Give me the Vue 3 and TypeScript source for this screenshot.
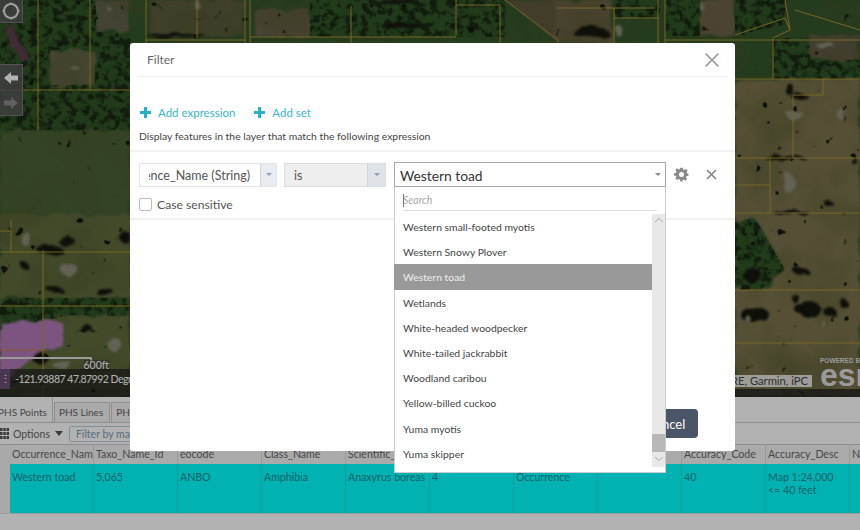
<script setup lang="ts">
const tabs = ['PHS Points', 'PHS Lines', 'PHS Polygons']

const species = [
  'Western small-footed myotis',
  'Western Snowy Plover',
  'Western toad',
  'Wetlands',
  'White-headed woodpecker',
  'White-tailed jackrabbit',
  'Woodland caribou',
  'Yellow-billed cuckoo',
  'Yuma myotis',
  'Yuma skipper',
]

const columns = [
  'Occurrence_Name', 'Taxo_Name_Id', 'eocode', 'Class_Name', 'Scientific_Name', 'Rank',
  'Type', 'Notes', 'Accuracy_Code', 'Accuracy_Desc', 'Notes',
]
const cells = [
  'Western toad', '5,065', 'ANBO', 'Amphibia', 'Anaxyrus boreas', '4',
  'Occurrence', '', '40', 'Map 1:24,000\n<= 40 feet', '',
]

// parcel boundaries on the map
const parcels = [
  'M38 0V130M90 0V90M0 90H130M11 220V252M0 231H11M0 252H130M43 250V397M0 306H130',
  'M146 0V43M197 0V38M245 0V43M250 0V43M146 40H245M351 6V43M456 0V36M250 37H456M456 5H500M500 5V43',
  'M505 0L558 40V43M557 8H655M614 8V43M614 18H658M658 0V43M665 0V43M665 40H860',
  'M735 79H860M735 158H860M735 213H860M735 290H860M735 343H860M823 79V95M793 95H823M793 95V158',
  'M770 158V213M735 185H770M735 35L785 18L790 30L773 38V79M785 0L790 30M795 10L860 30',
]
const fields = [
  { d: 'M735 79H860V397H735Z', fill: '#7a724e' },
  { d: 'M0 215H130V397H0Z', fill: '#5e6b3c' },
  { d: 'M0 130H130V215H0Z', fill: '#4c6034' },
  { d: 'M555 0H612V43H555Z', fill: '#6a6044' },
  { d: 'M150 0H245V36H150Z', fill: '#5a5c3c' },
  { d: 'M255 10H310V36H255Z', fill: '#66604a' },
  { d: 'M505 0H555V40Z', fill: '#5e583e' },
  { d: 'M700 0H735V36H700Z', fill: '#6e6248' },
  { d: 'M50 50H95V85H50Z', fill: '#66664c' },
  { d: 'M96 0H130V32H96Z', fill: '#5f6048' },
  { d: 'M810 35H860V60H810Z', fill: '#5e5a44' },
]
const forests = [
  'M0 0H50V130H0Z', 'M50 85H130V130H50Z', 'M95 32H130V90H95Z', 'M50 0H96V50H50Z',
  'M310 0H505V37H310Z', 'M615 0H660V18H615Z', 'M665 0H700V36H665Z',
  'M773 38H810V79H773Z', 'M810 60H860V79H810Z', 'M735 0H785V25L735 35Z',
  'M735 222L755 218L785 270L760 290H735Z', 'M10 298H130V316L70 315L0 330V305Z',
]
const trees = [
  [50, 250, 13, 4], [68, 243, 8, 5], [25, 266, 4, 3], [55, 290, 8, 3], [105, 292, 9, 3], [125, 237, 4, 7],
  [85, 327, 4, 5], [790, 90, 5, 5], [800, 97, 9, 3], [785, 158, 20, 2], [790, 212, 18, 2],
  [755, 315, 14, 8], [800, 270, 8, 3], [800, 308, 7, 4], [795, 298, 4, 4], [810, 310, 11, 8],
  [830, 312, 6, 5], [845, 305, 4, 4], [830, 205, 4, 3], [855, 162, 3, 3], [40, 358, 9, 4],
  [15, 380, 5, 2], [752, 275, 10, 6], [400, 25, 20, 3], [590, 32, 18, 5], [400, 3, 25, 2], [175, 36, 30, 2],
]
const lights = [
  [75, 68, 4, 2], [840, 113, 3, 6], [795, 115, 9, 4], [790, 185, 6, 10], [70, 270, 8, 7], [25, 238, 5, 7],
  [115, 345, 7, 7], [748, 319, 2, 3], [825, 45, 9, 3], [62, 365, 10, 3], [826, 326, 2, 3], [620, 32, 4, 5],
  [197, 4, 2, 5], [700, 5, 2, 4], [108, 8, 2, 2],
]
</script>

<template>
  <div class="page">
    <div class="map">
      <svg class="imagery" viewBox="0 0 860 397" preserveAspectRatio="none">
        <defs>
          <filter id="canopy" x="0" y="0" width="100%" height="100%" color-interpolation-filters="sRGB">
            <feTurbulence type="fractalNoise" baseFrequency="0.13" numOctaves="3" seed="6" />
            <feColorMatrix values="0 0 0 0 .1  0 0 0 0 .16  0 0 0 0 .08  5 0 0 0 -2.300" />
            <feGaussianBlur stdDeviation=".7" />
            <feComposite in2="SourceGraphic" operator="in" />
          </filter>
          <filter id="scatter" x="0" y="0" width="100%" height="100%" color-interpolation-filters="sRGB">
            <feTurbulence type="fractalNoise" baseFrequency="0.08" numOctaves="2" seed="21" />
            <feColorMatrix values="0 0 0 0 .08  0 0 0 0 .1  0 0 0 0 .05  14 0 0 0 -10.300" />
            <feGaussianBlur stdDeviation=".7" />
          </filter>
          <filter id="grain" x="0" y="0" width="100%" height="100%" color-interpolation-filters="sRGB">
            <feTurbulence type="fractalNoise" baseFrequency="0.02" numOctaves="3" seed="11" />
            <feColorMatrix values="0 0 0 0 .3  0 0 0 0 .32  0 0 0 0 .15  1 0 0 0 -.42" />
          </filter>
          <filter id="rough" x="-5%" y="-5%" width="110%" height="110%">
            <feTurbulence type="fractalNoise" baseFrequency="0.06" numOctaves="2" seed="3" />
            <feDisplacementMap in="SourceGraphic" scale="10" />
            <feGaussianBlur stdDeviation="1.200" />
          </filter>
        </defs>
        <rect width="860" height="397" fill="#36552b" />
        <g filter="url(#rough)">
          <path v-for="f in fields" :key="f.d" :d="f.d" :fill="f.fill" />
        </g>
        <rect width="860" height="397" filter="url(#grain)" />
        <g filter="url(#rough)">
          <path v-for="f in forests" :key="f" :d="f" fill="#2f5226" />
        </g>
        <path v-for="f in forests" :key="f" :d="f" filter="url(#canopy)" />
        <rect width="860" height="397" filter="url(#scatter)" />
        <g filter="url(#rough)">
          <path d="M0 322L45 320L65 325L60 345L30 358L10 375H0Z" fill="#b07ab8" />
          <path d="M120 240L130 225V245ZM5 30L20 60L30 60L12 25Z" fill="#5e3c4c" />
          <ellipse v-for="t in trees" :key="`${t[0]}-${t[1]}`" :cx="t[0]" :cy="t[1]" :rx="t[2]" :ry="t[3]" fill="#15190f" />
          <ellipse v-for="l in lights" :key="`${l[0]}-${l[1]}`" :cx="l[0]" :cy="l[1]" :rx="l[2]" :ry="l[3]" fill="#8e8c7a" />
        </g>
        <path v-for="p in parcels" :key="p" :d="p" fill="none" stroke="#ab9336" stroke-width="1" />
        <path d="M0 350H45" fill="none" stroke="#c9803c" stroke-width="1" />
      </svg>

      <div class="tool tool-locate">
        <svg width="20" height="20" viewBox="0 0 20 20">
          <circle cx="10" cy="10" r="7" fill="none" stroke="#e6e6e6" stroke-width="2" />
          <path d="M10 1V4M10 16V19M1 10H4M16 10H19" stroke="#e6e6e6" stroke-width="1" />
        </svg>
      </div>
      <div class="tool tool-nav">
        <svg width="16" height="14" viewBox="0 0 16 14"><path d="M1 7L8 1V4.500H15V9.500H8V13Z" fill="#fff" /></svg>
        <svg width="16" height="14" viewBox="0 0 16 14"><path d="M15 7L8 1V4.500H1V9.500H8V13Z" fill="#8a8a8a" /></svg>
      </div>

      <div class="scale"><span>600ft</span></div>
      <div class="coords">
        <span class="coords-btn">⋮</span>
        <span class="coords-text">-121.93887 47.87992 Degrees</span>
      </div>
      <div class="attribution">HERE, Garmin, iPC</div>
      <div class="esri"><small>POWERED BY</small><b>esri</b></div>
      <div class="map-foot"></div>
    </div>

    <div class="panel">
      <div class="tabs">
        <div v-for="(t, i) in tabs" :key="t" class="tab" :class="{ active: i === 0 }">{{ t }}</div>
      </div>
      <div class="options">
        <svg width="9" height="11" viewBox="0 0 9 11" class="grid-ic">
          <path d="M0 0h2.500v3H0zM3.300 0h2.500v3H3.300zM6.500 0H9v3H6.500zM0 4h2.500v3H0zM3.300 4h2.500v3H3.300zM6.500 4H9v3H6.500zM0 8h2.500v3H0zM3.300 8h2.500v3H3.300zM6.500 8H9v3H6.500z" fill="#555" />
        </svg>
        <span class="options-label">Options</span>
        <span class="options-caret"></span>
        <div class="map-filter">Filter by map extent</div>
      </div>
      <div class="grid">
        <div class="gutter"></div>
        <div class="cols head">
          <div v-for="(c, i) in columns" :key="i" class="cell">{{ c }}</div>
        </div>
        <div class="gutter"></div>
        <div class="cols row">
          <div v-for="(c, i) in cells" :key="i" class="cell">{{ c }}</div>
        </div>
      </div>
    </div>

    <div class="dim">
      <div class="modal">
        <div class="modal-head">
          <span>Filter</span>
          <svg width="16" height="16" viewBox="0 0 16 16"><path d="M1.500 1.500L14.500 14.500M14.500 1.500L1.500 14.500" stroke="#999" stroke-width="1.700" fill="none" /></svg>
        </div>

        <div class="adds">
          <span class="add"><i class="plus"></i>Add expression</span>
          <span class="add"><i class="plus"></i>Add set</span>
        </div>
        <div class="hint">Display features in the layer that match the following expression</div>

        <div class="expr">
          <div class="expr-row">
            <div class="sel sel-field">
              <span class="sel-text"><span>Occurrence_Name (String)</span></span>
              <span class="sel-arrow"><i></i></span>
            </div>
            <div class="sel sel-op">
              <span class="sel-text"><span>is</span></span>
              <span class="sel-arrow"><i></i></span>
            </div>
            <div class="value">
              <span>Western toad</span>
              <i class="value-caret"></i>
              <div class="drop">
                <div class="search"><span class="search-in">Search</span></div>
                <div class="drop-body">
                  <ul class="list">
                    <li v-for="s in species" :key="s" :class="{ picked: s === 'Western toad' }">{{ s }}</li>
                  </ul>
                  <div class="scroll">
                    <svg width="10" height="6" viewBox="0 0 10 6"><path d="M1 5L5 1.500L9 5" fill="none" stroke="#aaa" /></svg>
                    <div class="thumb"></div>
                    <svg width="10" height="6" viewBox="0 0 10 6"><path d="M1 1L5 4.500L9 1" fill="none" stroke="#aaa" /></svg>
                  </div>
                </div>
              </div>
            </div>
            <svg class="gear" width="15" height="15" viewBox="0 0 24 24">
              <path fill="#8a8a8a" fill-rule="evenodd" d="M10 1h4l.6 3.100 1.900.8 2.600-1.800 2.800 2.800-1.800 2.600.8 1.900L23 10v4l-3.100.6-.8 1.900 1.800 2.600-2.800 2.800-2.600-1.800-1.900.8L13.900 23h-4l-.6-3.100-1.900-.8-2.600 1.800-2.800-2.800 1.800-2.600-.8-1.900L0 14v-4l3.100-.6.8-1.900L2.100 4.900l2.800-2.800 2.600 1.800 1.900-.8zM12 8a4 4 0 1 0 0 8 4 4 0 0 0 0-8z" />
            </svg>
            <svg class="del" width="11" height="11" viewBox="0 0 11 11"><path d="M1 1L10 10M10 1L1 10" stroke="#888" stroke-width="1.700" fill="none" /></svg>
          </div>
          <label class="case"><i class="box"></i>Case sensitive</label>
        </div>

        <div class="foot">
          <button class="cancel">Cancel</button>
        </div>
      </div>
    </div>
  </div>
</template>

<style scoped>
.page {
  position: relative;
  width: 860px;
  height: 530px;
  overflow: hidden;
  background: #fff;
  font-family: Lato, "Open Sans", sans-serif;
}

.map {
  position: relative;
  height: 397px;
  overflow: hidden;
}
.imagery {
  display: block;
  width: 860px;
  height: 397px;
}
.tool {
  position: absolute;
  left: 0;
  width: 23px;
  background: rgba(90, 90, 90, .85);
  border: 1px solid #777;
  border-left: 0;
  display: flex;
  flex-direction: column;
  align-items: center;
  justify-content: space-around;
  box-sizing: border-box;
}
.tool-locate { top: -1px; height: 24px; }
.tool-nav { top: 64px; height: 52px; }

.scale {
  position: absolute;
  left: 0;
  top: 357px;
  width: 92px;
  height: 6px;
  border-top: 2px solid #ddd;
  border-right: 2px solid #ddd;
  box-sizing: border-box;
}
.scale span {
  position: absolute;
  right: -19px;
  top: 1px;
  font-size: 10.500px;
  line-height: 11px;
  color: #fff;
  background: rgba(60, 60, 60, .6);
}
.coords {
  position: absolute;
  left: 0;
  top: 369px;
  width: 300px;
  height: 20px;
  display: flex;
  align-items: center;
  gap: 5px;
  background: rgba(30, 30, 30, .7);
  color: #fff;
  white-space: nowrap;
}
.coords-text {
  font-size: 10.500px;
  letter-spacing: -.5px;
}
.coords-btn {
  width: 10px;
  height: 20px;
  line-height: 20px;
  text-align: right;
  background: #6b4f75;
  font-size: 11px;
  flex: none;
}
.attribution {
  position: absolute;
  left: 640px;
  top: 375px;
  width: 172px;
  height: 12px;
  line-height: 12px;
  overflow: hidden;
  white-space: nowrap;
  text-align: right;
  background: rgba(255, 255, 255, .8);
  color: #444;
  font-size: 11.200px;
  padding-right: 4px;
  box-sizing: border-box;
}
.esri {
  position: absolute;
  left: 820px;
  top: 357px;
  color: #ddd;
  white-space: nowrap;
  display: flex;
  flex-direction: column;
}
.esri small {
  font-family: "Liberation Sans", sans-serif;
  font-size: 6.500px;
  font-weight: 700;
  line-height: 7px;
}
.esri b {
  font-family: "Liberation Sans", sans-serif;
  font-size: 32px;
  line-height: 22px;
}
.map-foot {
  position: absolute;
  left: 0;
  right: 0;
  bottom: 0;
  height: 8px;
  background: rgba(30, 30, 30, .75);
}

.panel {
  height: 133px;
  background: #fff;
  display: flex;
  flex-direction: column;
  color: #666;
}
.tabs {
  height: 26px;
  display: flex;
  gap: 1px;
  align-items: flex-end;
  margin-left: -8px;
  border-bottom: 1px solid #ccc;
  box-sizing: border-box;
  flex: none;
}
.tab {
  height: 19px;
  line-height: 18px;
  padding: 0 6px 0 4px;
  font-size: 10px;
  border: 1px solid #ccc;
  border-bottom: 0;
  background: #f4f4f4;
  white-space: nowrap;
}
.tab.active {
  height: 25px;
  line-height: 30px;
  padding: 0 5px;
  background: #fff;
  border-top: 2px solid #dfe9f2;
}
.options {
  height: 21px;
  flex: none;
  display: flex;
  align-items: center;
  border-bottom: 1px solid #ccc;
  font-size: 10.500px;
}
.grid-ic { flex: none; }
.options-label { margin-left: 4px; }
.options-caret {
  margin-left: 5px;
  border-left: 4px solid transparent;
  border-right: 4px solid transparent;
  border-top: 5px solid #555;
}
.map-filter {
  margin-left: 6px;
  height: 16px;
  line-height: 15px;
  width: 120px;
  padding-left: 6px;
  border: 1px solid #bcd;
  border-radius: 2px;
  color: #7f9cba;
  box-sizing: border-box;
}
.grid {
  display: grid;
  grid-template-columns: 10px auto;
  grid-template-rows: 19px 49px;
  flex: none;
  border-bottom: 1px solid #ddd;
}
.gutter { background: #f2f2f2; }
.cols {
  display: grid;
  grid-template-columns: repeat(11, 84px);
  overflow: hidden;
  font-size: 10.600px;
}
.cell {
  padding: 2px 2px 0;
  white-space: pre-line;
  overflow: hidden;
  border-right: 1px solid #ddd;
  box-sizing: border-box;
  line-height: 12.500px;
}
.head .cell {
  white-space: nowrap;
  background: #f4f4f4;
  padding-top: 3px;
  color: #666;
}
.row { background: #00ffff; color: #0b8f94; }
.row .cell {
  padding-top: 7px;
  border-right-color: #22dede;
}

.dim {
  position: absolute;
  inset: 0;
  display: flex;
  padding: 43px 125px 79px 130px;
  background: rgba(0, 0, 0, .3);
  box-sizing: border-box;
}
.modal {
  flex: 1;
  display: flex;
  flex-direction: column;
  background: #fff;
  border-radius: 3px;
  color: #444;
}
.modal-head {
  height: 33px;
  margin: 0 8px 0 8px;
  padding: 0 7px 0 9px;
  display: flex;
  align-items: center;
  justify-content: space-between;
  border-bottom: 1px solid #f0f0f0;
  font-size: 12px;
  color: #666;
  flex: none;
}
.adds {
  margin-top: 27px;
  padding-left: 10px;
  display: flex;
  gap: 19px;
  flex: none;
  height: 16px;
  align-items: center;
}
.add {
  display: flex;
  align-items: center;
  gap: 7px;
  font-size: 11.500px;
  color: #3ab4c8;
}
.plus {
  width: 11px;
  height: 11px;
  background:
    linear-gradient(#27b0c8, #27b0c8) center / 11px 3px no-repeat,
    linear-gradient(#27b0c8, #27b0c8) center / 3px 11px no-repeat;
}
.hint {
  margin-top: 9px;
  padding-left: 9px;
  font-size: 10.400px;
  line-height: 14px;
  color: #444;
  height: 21px;
  flex: none;
}
.expr {
  border-top: 2px solid #f1f1f1;
  border-bottom: 2px solid #f1f1f1;
  height: 70px;
  box-sizing: border-box;
  padding: 10px 9px 0;
  flex: none;
}
.expr-row {
  display: flex;
  align-items: center;
  height: 25px;
}
.sel {
  height: 24px;
  display: flex;
  align-items: stretch;
  border: 1px solid #e4e4e4;
  box-sizing: border-box;
  font-size: 12.500px;
  color: #555;
}
.sel-text {
  flex: 1;
  min-width: 0;
  display: flex;
  overflow: hidden;
  white-space: nowrap;
  line-height: 23px;
}
.sel-text span { flex: none; }
.sel-field { width: 138px; }
.sel-field .sel-text {
  justify-content: flex-end;
  border-left: 9px solid #fff;
  padding-right: 10px;
}
.sel-op {
  width: 102px;
  margin-left: 7px;
  background: #eeeeee;
  border-color: #ddd;
}
.sel-op .sel-text { padding-left: 9px; }
.sel-arrow {
  width: 15px;
  flex: none;
  display: flex;
  align-items: center;
  justify-content: center;
  background: #e8ebef;
  border-left: 1px solid #d4d4d4;
}
.sel-op .sel-arrow { width: 17px; background: #dfe2e6; }
.sel-arrow i {
  border-left: 3px solid transparent;
  border-right: 3px solid transparent;
  border-top: 3px solid #8aa0b8;
}
.value {
  position: relative;
  width: 272px;
  height: 25px;
  margin-left: 8px;
  border: 1px solid #a9a9a9;
  box-sizing: border-box;
  display: flex;
  align-items: center;
  padding: 1px 0 0 5px;
  font-size: 13.800px;
  color: #333;
}
.value-caret {
  position: absolute;
  right: 4px;
  top: 10px;
  border-left: 3px solid transparent;
  border-right: 3px solid transparent;
  border-top: 3px solid #888;
}
.gear { margin-left: 8px; flex: none; }
.del { margin-left: 17px; flex: none; }
.case {
  display: flex;
  align-items: center;
  gap: 5px;
  margin-top: 10px;
  font-size: 12.200px;
  color: #555;
}
.box {
  width: 13px;
  height: 13px;
  border: 1px solid #bbb;
  border-radius: 2px;
  box-sizing: border-box;
}
.drop {
  position: absolute;
  left: -1px;
  top: 24px;
  width: 272px;
  height: 286px;
  z-index: 2;
  display: flex;
  flex-direction: column;
  background: #fff;
  border: 1px solid #ccc;
  border-top: 0;
  box-sizing: border-box;
}
.search {
  flex: none;
  height: 27px;
  padding: 0 8px;
}
.search-in {
  display: block;
  height: 23px;
  line-height: 27px;
  font-size: 10.500px;
  font-style: italic;
  color: #aaa;
  border-bottom: 1px solid #ddd;
  position: relative;
}
.search-in::before {
  content: "";
  position: absolute;
  left: 0;
  top: 7px;
  width: 1px;
  height: 13px;
  background: #777;
}
.drop-body {
  flex: 1;
  display: flex;
  min-height: 0;
  padding-bottom: 5px;
}
.list {
  flex: 1;
  margin: 0;
  padding: 0;
  list-style: none;
}
.list li {
  height: 25.200px;
  line-height: 26.500px;
  padding-left: 8px;
  font-size: 10.400px;
  color: #444;
}
.list li.picked {
  margin-left: -1px;
  padding-left: 9px;
  background: #999;
  color: #eee;
}
.scroll {
  width: 13px;
  flex: none;
  background: #e8e8e8;
  display: flex;
  flex-direction: column;
  align-items: center;
  padding-top: 3px;
  box-sizing: border-box;
}
.thumb {
  width: 13px;
  height: 18px;
  margin-top: auto;
  margin-bottom: 4px;
  background: #b8b8b8;
}
.scroll svg:last-child { margin-bottom: 5px; }
.foot {
  flex: 1;
  display: flex;
  justify-content: flex-end;
  align-items: flex-end;
  padding: 0 37px 13px 0;
}
.cancel {
  width: 64px;
  height: 29px;
  border: 0;
  border-radius: 4px;
  background: #4b5568;
  color: #fff;
  font: 13px Lato, sans-serif;
}
</style>
